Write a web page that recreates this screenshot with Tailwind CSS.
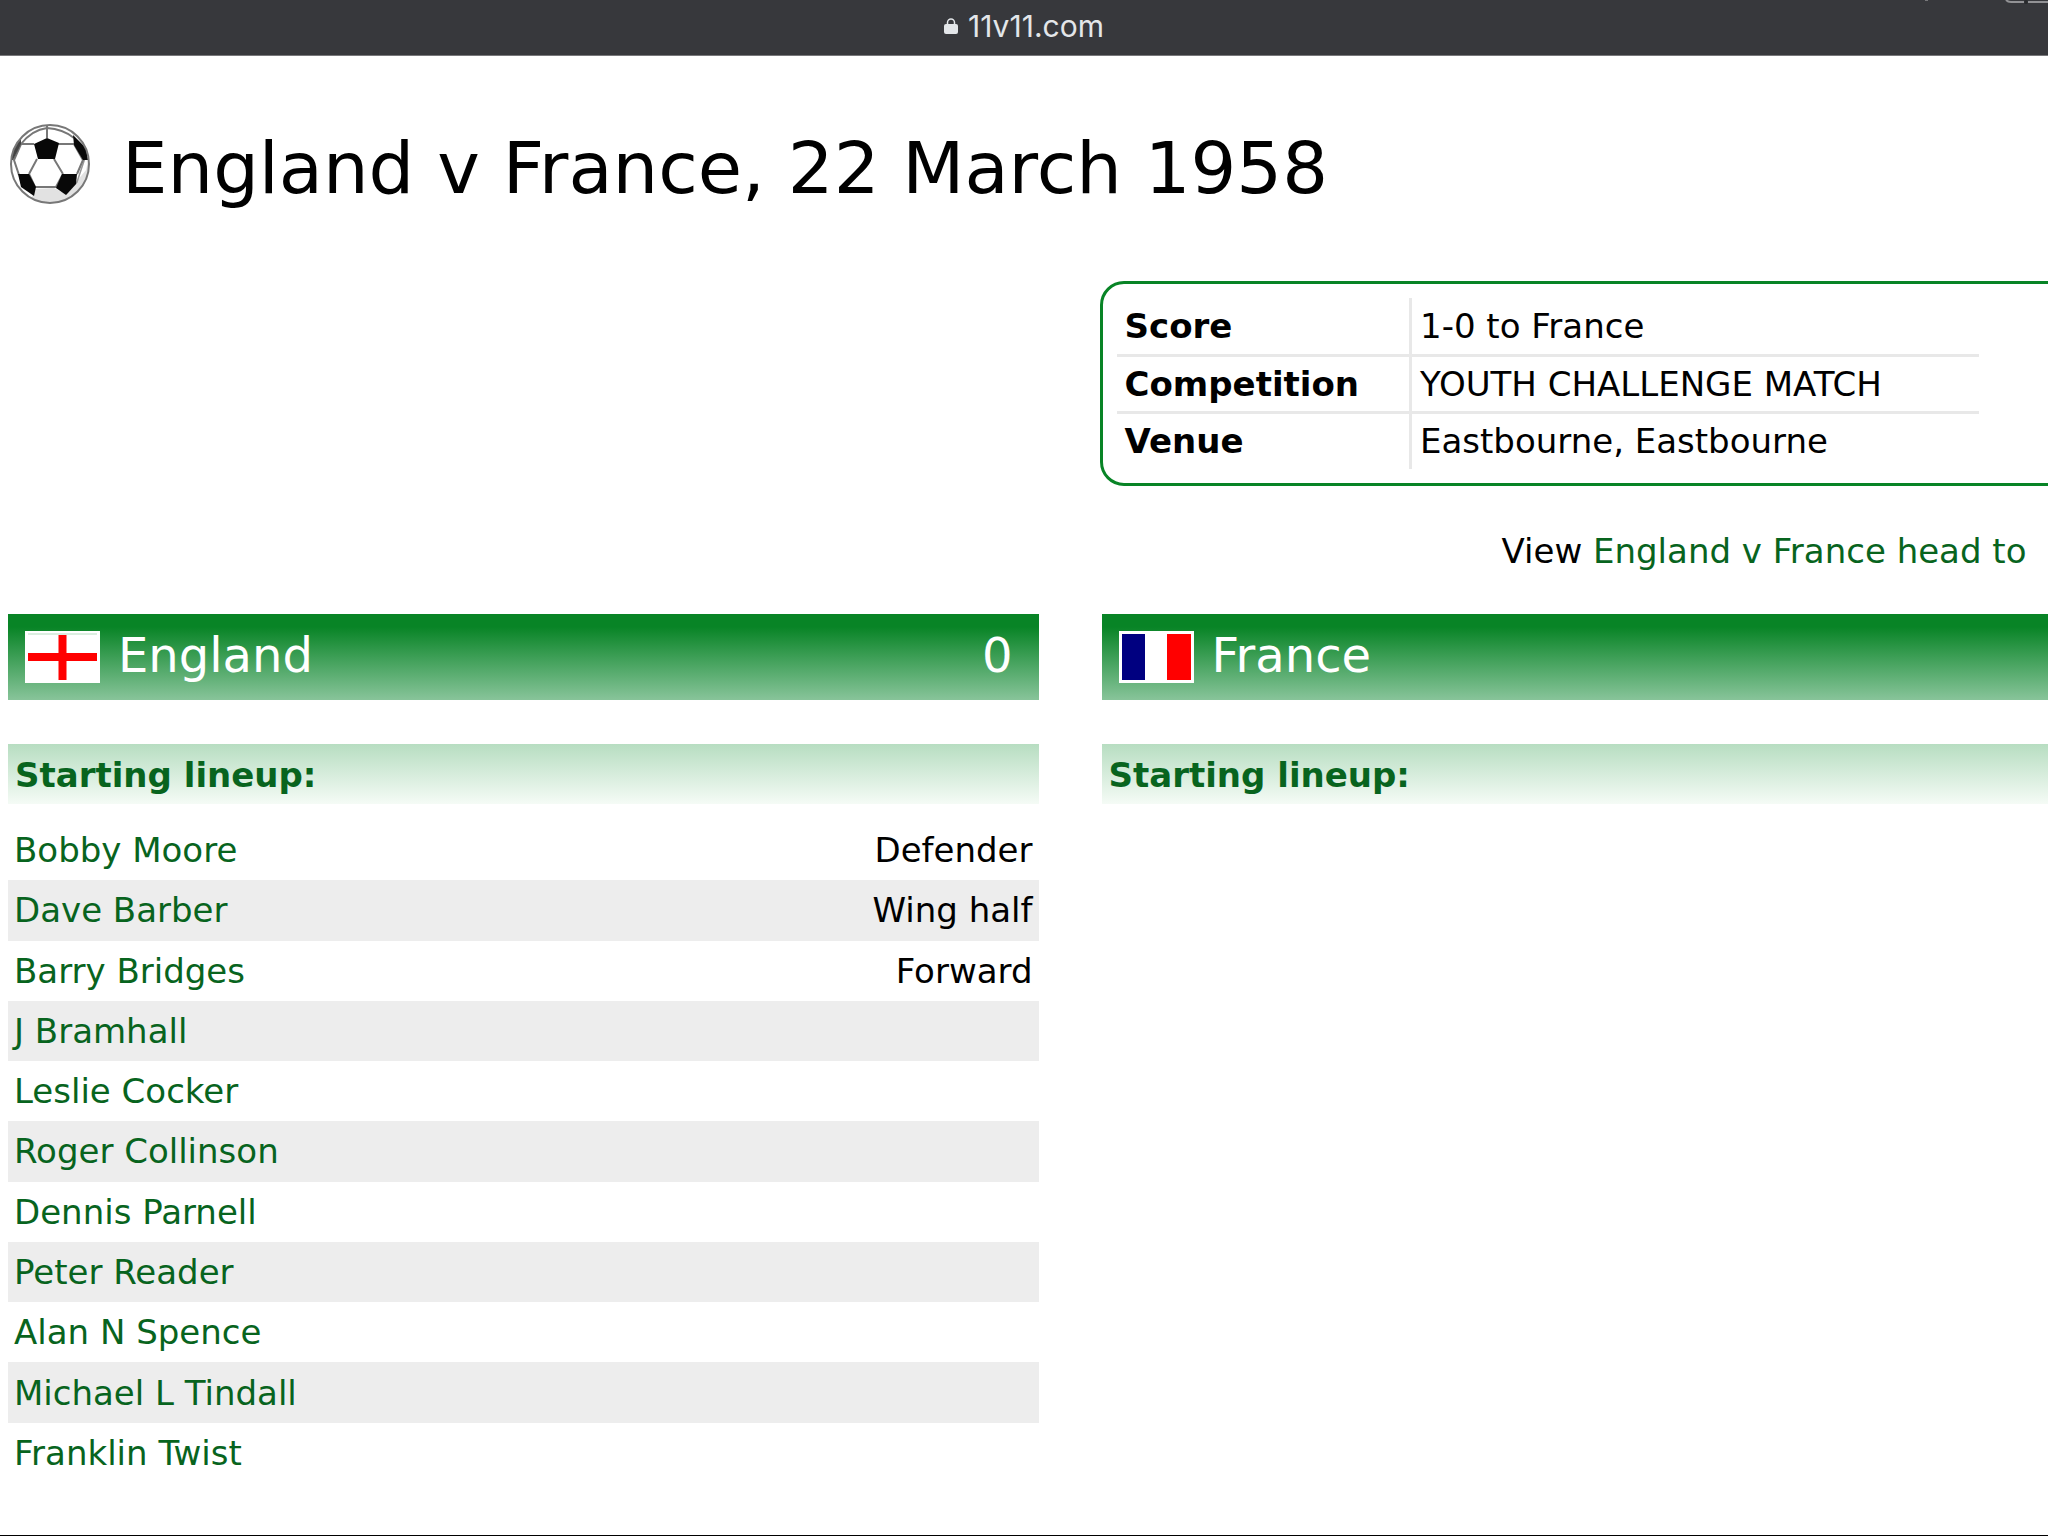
<!DOCTYPE html>
<html lang="en">
  <head>
    <meta charset="UTF-8" />
    <meta name="viewport" content="width=device-width, initial-scale=1.0" />
    <title>England v France, 22 March 1958</title>
    <script src="https://cdn.jsdelivr.net/npm/@tailwindcss/browser@4"></script>
  </head>
  <body
    class="min-h-screen overflow-x-hidden border-b border-black bg-white font-['Verdana','DejaVu_Sans',sans-serif] text-[34px] leading-[42px] text-black"
  >
    <!-- Browser bar -->
    <div
      class="relative flex h-14 items-center justify-center gap-2.5 overflow-hidden border-b border-[#77777a] bg-[#37383c] pb-1 font-['Inter',sans-serif] text-[30px] text-[#e3e6e9]"
    >
      <svg class="h-4 w-3.5" viewBox="0 0 14 16" aria-hidden="true">
        <path d="M3.500 7V4.500a3.500 3.500 0 0 1 7 0V7" fill="none" stroke="#e3e6e9" stroke-width="1.500" />
        <rect y="6" width="14" height="10" rx="2" fill="#e3e6e9" />
      </svg>
      <span>11v11.com</span>
      <svg class="absolute top-0 right-0 h-1 w-[123px]" viewBox="0 0 123 4" aria-hidden="true">
        <path d="M0 .5H3" stroke="#77777a" />
        <path d="M81 0Q83 2 86 2H99M103 2H123" fill="none" stroke="#929295" stroke-width="2" />
        <path d="M101 0V4" stroke="#292a2d" stroke-width="3" />
      </svg>
    </div>

    <div class="overflow-hidden pl-2">
      <header class="flex items-center gap-8 pt-[62px]">
        <svg class="mb-1.5 h-[82px] w-[82px] shrink-0" viewBox="0 0 82 82" role="img" aria-label="Football">
          <defs>
            <clipPath id="ball"><circle cx="42" cy="40" r="39" /></clipPath>
          </defs>
          <circle cx="42" cy="40" r="39" fill="#fff" />
          <g clip-path="url(#ball)">
            <path d="M26 65 46 64 58 70 78 46 82 28V82H22Z" fill="#e2e2e2" />
            <path d="M58 70 69 58 77 34" fill="none" stroke="#999" stroke-width="1.5" />
            <g fill="none" stroke="#777" stroke-width="2">
              <path d="M39 2V14M13 20H26M50 20H66M29 35 21 50M46 35 55 50M21 50 27 63H48L55 50M13 20 6 36 11 51M66 20 75 36 69 50" />
              <path d="M13 20Q24 6 39 4Q55 5 66 14" />
            </g>
            <g fill="#080808">
              <path d="M39 14 51 19 47 35 30 35 26 20Z" />
              <path d="M65 11 78 24 80 36 75 36 66 21Z" />
              <path d="M10 50 21 50 28 63 26 72 13 63Z" />
              <path d="M54 50 69 50 68 60 58 71 48 64Z" />
              <path d="M13 13 13 20 5 36 1 36V22Z" fill="#444" />
            </g>
          </g>
          <circle cx="42" cy="40" r="39" fill="none" stroke="#777" stroke-width="2" />
        </svg>
        <h1 class="text-[72px] leading-[100px] whitespace-nowrap">England v France, 22 March 1958</h1>
      </header>

      <!-- Two columns, the right one runs past the window edge -->
      <main class="-mr-[84px] grid grid-cols-2 gap-x-[63px] pt-[63px]">
        <section class="col-start-2">
          <div class="-ml-0.5 rounded-3xl border-3 border-[#088426] p-3.5">
            <table class="w-[862px] border-collapse">
              <tr class="h-[57px] border-b-3 border-[#e8e8e8]">
                <th scope="row" class="w-[294px] border-r-3 border-[#e8e8e8] px-2 text-left">Score</th>
                <td class="px-2">1-0 to France</td>
              </tr>
              <tr class="h-[57px] border-b-3 border-[#e8e8e8]">
                <th scope="row" class="border-r-3 border-[#e8e8e8] px-2 text-left">Competition</th>
                <td class="px-2">YOUTH CHALLENGE MATCH</td>
              </tr>
              <tr class="h-[57px]">
                <th scope="row" class="border-r-3 border-[#e8e8e8] px-2 text-left">Venue</th>
                <td class="px-2">Eastbourne, Eastbourne</td>
              </tr>
            </table>
          </div>
          <p class="pt-11 pb-[42px] pl-[400px] whitespace-nowrap">
            View <a href="#" class="text-[#08641e]">England v France head to</a>
          </p>
        </section>

        <section class="col-start-1">
          <h2
            class="flex h-[86px] items-center bg-linear-to-b/srgb from-[#088426] from-15% to-[#88c49a] pr-[26px] pb-1 pl-[17px] text-5xl text-white"
          >
            <svg class="mt-1 mr-[18px] h-[52px] w-[75px]" viewBox="0 0 75 52" role="img" aria-label="England">
              <path d="M0 0H75V52H0Z" fill="#fff" />
              <path d="M3 3H72" stroke="#b7ddc1" />
              <path d="M3 26H72M37.500 4V49" stroke="#f00" stroke-width="8" />
            </svg>
            England
            <span class="ml-auto">0</span>
          </h2>
          <h3
            class="mt-11 h-[60px] bg-linear-to-b/srgb from-[#b7ddc1] to-[#f5fbf6] px-[7px] pt-2.5 font-bold text-[#08641e]"
          >
            Starting lineup:
          </h3>
          <table class="mt-4 h-[663px] w-full">
            <tbody id="england-lineup"></tbody>
          </table>
        </section>

        <section>
          <h2
            class="flex h-[86px] items-center bg-linear-to-b/srgb from-[#088426] from-15% to-[#88c49a] pr-[26px] pb-1 pl-[17px] text-5xl text-white"
          >
            <svg class="mt-1 mr-[18px] h-[52px] w-[75px]" viewBox="0 0 75 52" role="img" aria-label="France">
              <path d="M0 0H75V52H0Z" fill="#fff" />
              <path d="M3 3H26V49H3Z" fill="#000080" />
              <path d="M48 3H72V49H48Z" fill="#f00" />
            </svg>
            France
          </h2>
          <h3
            class="mt-11 h-[60px] bg-linear-to-b/srgb from-[#b7ddc1] to-[#f5fbf6] px-[7px] pt-2.5 font-bold text-[#08641e]"
          >
            Starting lineup:
          </h3>
        </section>
      </main>
    </div>

    <script>
      const players = [
        ["Bobby Moore", "Defender"],
        ["Dave Barber", "Wing half"],
        ["Barry Bridges", "Forward"],
        ["J Bramhall", ""],
        ["Leslie Cocker", ""],
        ["Roger Collinson", ""],
        ["Dennis Parnell", ""],
        ["Peter Reader", ""],
        ["Alan N Spence", ""],
        ["Michael L Tindall", ""],
        ["Franklin Twist", ""],
      ];

      document.getElementById("england-lineup").innerHTML = players
        .map(
          ([name, position]) => `
            <tr class="even:bg-[#ededed]">
              <td class="px-1.5"><a href="#" class="text-[#08641e]">${name}</a></td>
              <td class="px-1.5 text-right">${position}</td>
            </tr>
          `
        )
        .join("");
    </script>
  </body>
</html>
